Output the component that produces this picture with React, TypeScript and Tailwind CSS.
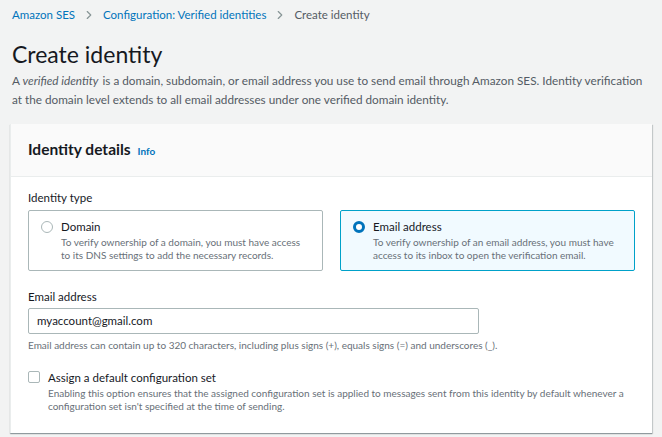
import { ChevronRight } from 'lucide-react'

const font = { fontFamily: 'Lato, "Noto Sans", sans-serif' }

function Tile({
    title,
    text,
    selected,
}: {
    title: string
    text: string
    selected?: boolean
}) {
    return (
        <div
            className={`flex-1 flex gap-[8px] px-[12px] pt-[6px] pb-[8px] rounded-[2px] border ${
                selected
                    ? 'border-[#00a1c9] bg-[#f1faff]'
                    : 'border-[#aab7b8] bg-white'
            }`}
        >
            <div className="pt-[4px]">
                {selected ? (
                    <div className="w-[12px] h-[12px] rounded-full border-[3.5px] border-[#0073bb] bg-white" />
                ) : (
                    <div className="w-[12px] h-[12px] rounded-full border border-[#aab7b8] bg-white" />
                )}
            </div>
            <div>
                <div className="text-[11.5px] leading-[19px] text-[#16191f]">
                    {title}
                </div>
                <div className="text-[10px] leading-[13px] text-[#687078]">
                    {text}
                </div>
            </div>
        </div>
    )
}

export default function App() {
    return (
        <div
            className="w-[662px] h-[437px] overflow-hidden bg-[#f2f3f3]"
            style={font}
        >
            <div className="px-[12px] pt-[5px]">
                <nav className="flex items-center gap-[7px] text-[11.5px] leading-[19px]">
                    <a className="text-[#0073bb]">Amazon SES</a>
                    <ChevronRight size={14} className="text-[#879596]" />
                    <a className="text-[#0073bb]">
                        Configuration: Verified identities
                    </a>
                    <ChevronRight size={14} className="text-[#879596]" />
                    <span className="text-[#545b64]">Create identity</span>
                </nav>
                <h1 className="mt-[15px] text-[23px] leading-[30px] text-[#16191f]">
                    Create identity
                </h1>
                <p className="mt-[2px] text-[11.75px] leading-[19px] text-[#545b64]">
                    A <i className="pr-[1px]">verified identity</i> is a
                    domain, subdomain, or email address you use to send email
                    through Amazon SES. Identity verification at the domain
                    level extends to all email addresses under one verified
                    domain identity.
                </p>
            </div>

            <div className="mx-[10px] mt-[15px] bg-white border-l border-[#eaeded] shadow-[0_1px_1px_0_rgba(0,28,36,0.3),1px_1px_1px_0_rgba(0,28,36,0.15)]">
                <div className="h-[53px] flex items-center gap-[7px] px-[17px] bg-[#fafafa] border-b border-[#eaeded]">
                    <h2 className="text-[15.5px] font-bold text-[#16191f]">
                        Identity details
                    </h2>
                    <span className="text-[10px] font-bold text-[#0073bb] pt-[2px]">
                        Info
                    </span>
                </div>
                <div className="px-[17px] pt-[11px] pb-[20px]">
                    <div className="text-[11.5px] leading-[19px] text-[#16191f]">
                        Identity type
                    </div>
                    <div className="mt-[3px] flex gap-[17px]">
                        <Tile
                            title="Domain"
                            text="To verify ownership of a domain, you must have access to its DNS settings to add the necessary records."
                        />
                        <Tile
                            selected
                            title="Email address"
                            text="To verify ownership of an email address, you must have access to its inbox to open the verification email."
                        />
                    </div>

                    <div className="mt-[16px] text-[11.5px] leading-[19px] text-[#16191f]">
                        Email address
                    </div>
                    <div className="mt-[2px] w-[451px] h-[26px] flex items-center px-[8px] border border-[#aab7b8] rounded-[2px] text-[11.5px] text-[#16191f]">
                        myaccount@gmail.com
                    </div>
                    <div className="mt-[4px] text-[10px] leading-[14px] text-[#687078]">
                        Email address can contain up to 320 characters,
                        including plus signs (+), equals signs (=) and
                        underscores (_).
                    </div>

                    <div className="mt-[16px] flex gap-[8px]">
                        <div className="pt-[3px]">
                            <div className="w-[12px] h-[12px] border border-[#aab7b8] rounded-[2px]" />
                        </div>
                        <div>
                            <div className="text-[11.5px] leading-[19px] text-[#16191f]">
                                Assign a default configuration set
                            </div>
                            <div className="text-[10px] leading-[13px] text-[#687078]">
                                Enabling this option ensures that the assigned
                                configuration set is applied to messages sent
                                from this identity by default whenever a
                                configuration set isn't specified at the time of
                                sending.
                            </div>
                        </div>
                    </div>
                </div>
            </div>
        </div>
    )
}
